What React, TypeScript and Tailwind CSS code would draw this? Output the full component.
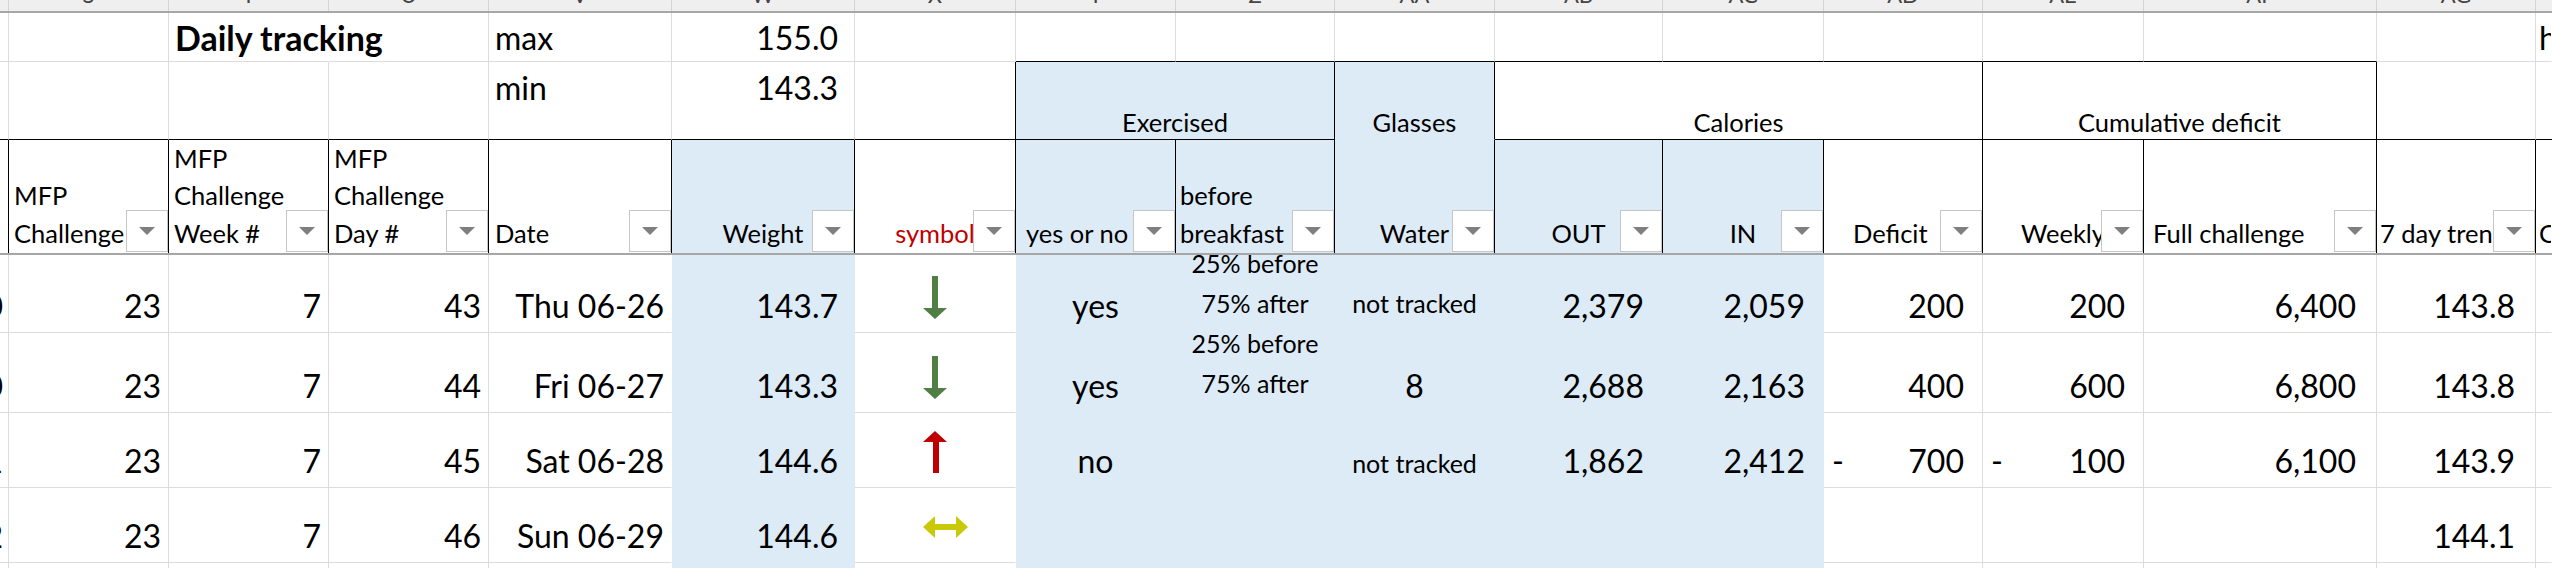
import clsx from "clsx";
import type { ReactNode } from "react";

// sheet columns, partial ones at both edges
const GRID =
  "grid grid-cols-[9px_160px_160px_160px_183px_183px_161px_160px_159px_160px_168px_161px_159px_161px_233px_159px_16px]";

const BLUE = [5, 7, 8, 9, 10, 11];
const isBlue = (i: number) => BLUE.includes(i);

const LETTERS = ["", "S", "T", "U", "V", "W", "X", "Y", "Z", "AA", "AB", "AC", "AD", "AE", "AF", "AG", ""];

const HEADERS: { lines: string[]; cls: string }[] = [
  { lines: [], cls: "" },
  { lines: ["MFP", "Challenge"], cls: "pl-[5px]" },
  { lines: ["MFP", "Challenge", "Week #"], cls: "pl-[5px]" },
  { lines: ["MFP", "Challenge", "Day #"], cls: "pl-[5px]" },
  { lines: ["Date"], cls: "pl-[6px]" },
  { lines: ["Weight"], cls: "justify-center" },
  { lines: ["symbol"], cls: "justify-center text-[#c00000]" },
  { lines: ["yes or no"], cls: "pl-[10px]" },
  { lines: ["before", "breakfast"], cls: "pl-[4px]" },
  { lines: ["Water"], cls: "justify-center" },
  { lines: ["OUT"], cls: "justify-center" },
  { lines: ["IN"], cls: "justify-center" },
  { lines: ["Deficit"], cls: "pl-[29px]" },
  { lines: ["Weekly"], cls: "justify-center" },
  { lines: ["Full challenge"], cls: "pl-[9px]" },
  { lines: ["7 day trend"], cls: "pl-[3px]" },
  { lines: ["C"], cls: "pl-[3px]" },
];

const DATA_ALIGN = [
  "justify-end pr-[5px]",
  "justify-end pr-[7px]",
  "justify-end pr-[7px]",
  "justify-end pr-[7px]",
  "justify-end pr-[7px]",
  "justify-end pr-[16px]",
  "justify-start pl-[68px]",
  "justify-center",
  "justify-center",
  "justify-center",
  "justify-end pr-[18px]",
  "justify-end pr-[18px]",
  "justify-between pl-[8px] pr-[18px]",
  "justify-between pl-[8px] pr-[18px]",
  "justify-end pr-[20px]",
  "justify-end pr-[20px]",
  "",
];

const FilterButton = () => (
  <div className="absolute right-0 bottom-[1px] w-[42px] h-[42px] bg-white border border-[#c6c6c6] flex items-center justify-center">
    <svg width="16" height="8" viewBox="0 0 16 8">
      <path d="M0 0H16L8 8Z" fill="#7f7f7f" />
    </svg>
  </div>
);

const DownArrow = () => (
  <svg width="24" height="43" viewBox="0 0 24 43" className="mb-[7px]">
    <path d="M9 0h6v32h9L12 43 0 32h9z" fill="#507e45" />
  </svg>
);

const UpArrow = () => (
  <svg width="24" height="42" viewBox="0 0 24 42" className="mb-[8px]">
    <path d="M12 0l12 11h-8v31h-6V11H0z" fill="#c00000" />
  </svg>
);

const SideArrow = () => (
  <svg width="45" height="22" viewBox="0 0 45 22" className="mb-[18px]">
    <path d="M0 11L12 0v8h21V0l12 11-12 11v-8H12v8z" fill="#c9c90a" />
  </svg>
);

const acct = (v: string, neg = false) => (
  <>
    <span>{neg ? "-" : ""}</span>
    <span>{v}</span>
  </>
);

const twoLine = (
  <span className="text-[25px] leading-[40px] text-center mb-[3px]">
    25% before
    <br />
    75% after
  </span>
);

const small = (t: string, cls: string) => <span className={clsx("text-[25px] leading-[40px]", cls)}>{t}</span>;

const ROWS: { h: string; cells: ReactNode[] }[] = [
  {
    h: "h-[78px]",
    cells: ["0", "23", "7", "43", "Thu 06-26", "143.7", <DownArrow />, "yes", twoLine, small("not tracked", "mb-[3px]"), "2,379", "2,059", acct("200"), acct("200"), "6,400", "143.8", ""],
  },
  {
    h: "h-[80px]",
    cells: ["0", "23", "7", "44", "Fri 06-27", "143.3", <DownArrow />, "yes", twoLine, "8", "2,688", "2,163", acct("400"), acct("600"), "6,800", "143.8", ""],
  },
  {
    h: "h-[75px]",
    cells: ["1", "23", "7", "45", "Sat 06-28", "144.6", <UpArrow />, "no", "", small("not tracked", "-mb-[2px]"), "1,862", "2,412", acct("700", true), acct("100", true), "6,100", "143.9", ""],
  },
  {
    h: "h-[75px]",
    cells: ["2", "23", "7", "46", "Sun 06-29", "144.6", <SideArrow />, "", "", "", "", "", "", "", "", "144.1", ""],
  },
  {
    h: "h-[5px]",
    cells: ["", "", "", "", "", "", "", "", "", "", "", "", "", "", "", "", ""],
  },
];

function dataCellClass(i: number) {
  if (isBlue(i)) return "bg-[#ddebf7] border-r-[#ddebf7] border-b-[#ddebf7]";
  if (i === 16) return "bg-white border-r-transparent border-b-[#dcdcdc]";
  if (isBlue(i + 1)) return "bg-white border-r-white border-b-[#dcdcdc]";
  return "bg-white border-r-[#dcdcdc] border-b-[#dcdcdc]";
}

export default function App() {
  return (
    <div className="w-[2552px] h-[568px] overflow-hidden bg-white text-black font-['Lato',sans-serif]">
      {/* column letters, cut at the top */}
      <div className={clsx(GRID, "h-[13px] bg-[#efefef] border-b-2 border-b-[#a6a6a6] overflow-hidden")}>
        {LETTERS.map((l, i) => (
          <div
            key={i}
            className={clsx(
              "flex justify-center items-start overflow-hidden border-r",
              i === 16 ? "border-r-transparent" : "border-r-[#d4d4d4]"
            )}
          >
            <span className="-mt-[16px] text-[22px] leading-[22px] text-[#444]">{l}</span>
          </div>
        ))}
      </div>

      {/* row 1 */}
      <div className={clsx(GRID, "h-[49px] text-[32px] leading-[40px]")}>
        {Array.from({ length: 17 }, (_, i) => (
          <div
            key={i}
            className={clsx(
              "flex items-end pb-[3px] border-r border-b whitespace-nowrap",
              i === 2 || i === 16 ? "border-r-transparent" : "border-r-[#dcdcdc]",
              i >= 7 && i <= 14 ? "border-b-black" : "border-b-[#dcdcdc]",
              i === 2 && "pl-[6px] relative z-10",
              i === 4 && "pl-[6px]",
              i === 5 && "justify-end pr-[16px]",
              i === 16 && "pl-[3px] overflow-hidden"
            )}
          >
            {i === 2 && <span className="font-bold text-[34px]">Daily tracking</span>}
            {i === 4 && "max"}
            {i === 5 && "155.0"}
            {i === 16 && "h"}
          </div>
        ))}
      </div>

      {/* row 2: group headers */}
      <div className={clsx(GRID, "h-[78px] text-[32px] leading-[40px]")}>
        {[0, 1, 2, 3, 4, 5].map((i) => (
          <div
            key={i}
            className={clsx(
              "flex items-start pt-[6px] border-r border-r-[#dcdcdc] border-b border-b-black whitespace-nowrap",
              i === 4 && "pl-[6px]",
              i === 5 && "justify-end pr-[16px]"
            )}
          >
            {i === 4 && "min"}
            {i === 5 && "143.3"}
          </div>
        ))}
        <div className="border-r border-r-black border-b border-b-black" />
        <div className="col-span-2 flex items-end justify-center bg-[#ddebf7] border-r border-r-black border-b border-b-black text-[25.5px] leading-[34px]">
          Exercised
        </div>
        <div className="flex items-end justify-center bg-[#ddebf7] border-r border-r-black border-b border-b-[#ddebf7] text-[25.5px] leading-[34px]">
          Glasses
        </div>
        <div className="col-span-3 flex items-end justify-center border-r border-r-black border-b border-b-black text-[25.5px] leading-[34px]">
          Calories
        </div>
        <div className="col-span-2 flex items-end justify-center border-r border-r-black border-b border-b-black text-[25.5px] leading-[34px]">
          Cumulative deficit
        </div>
        <div className="border-r border-r-[#dcdcdc] border-b border-b-black" />
        <div className="border-b border-b-black" />
      </div>

      {/* row 3: column headers with filter buttons */}
      <div className={clsx(GRID, "h-[113px] text-[25.5px] leading-[37.5px]")}>
        {HEADERS.map((h, i) => (
          <div
            key={i}
            className={clsx(
              "relative flex items-end overflow-hidden whitespace-nowrap border-r",
              i === 16 ? "border-r-transparent" : "border-r-black",
              isBlue(i) ? "bg-[#ddebf7]" : "bg-white",
              h.cls
            )}
          >
            <div className="mb-[1px]">
              {h.lines.map((l) => (
                <div key={l}>{l}</div>
              ))}
            </div>
            {i > 0 && i < 16 && <FilterButton />}
          </div>
        ))}
      </div>
      <div className="h-[2px] bg-[#a6a6a6]" />

      {/* data rows */}
      {ROWS.map((r, ri) => (
        <div key={ri} className={clsx(GRID, r.h, "text-[32px] leading-[40px]")}>
          {r.cells.map((c, i) => (
            <div
              key={i}
              className={clsx(
                "flex items-end pb-[6px] border-r border-b overflow-hidden whitespace-nowrap",
                r.h === "h-[5px]" && "pb-0",
                DATA_ALIGN[i],
                dataCellClass(i)
              )}
            >
              {typeof c === "string" ? <span className="shrink-0">{c}</span> : c}
            </div>
          ))}
        </div>
      ))}
    </div>
  );
}
